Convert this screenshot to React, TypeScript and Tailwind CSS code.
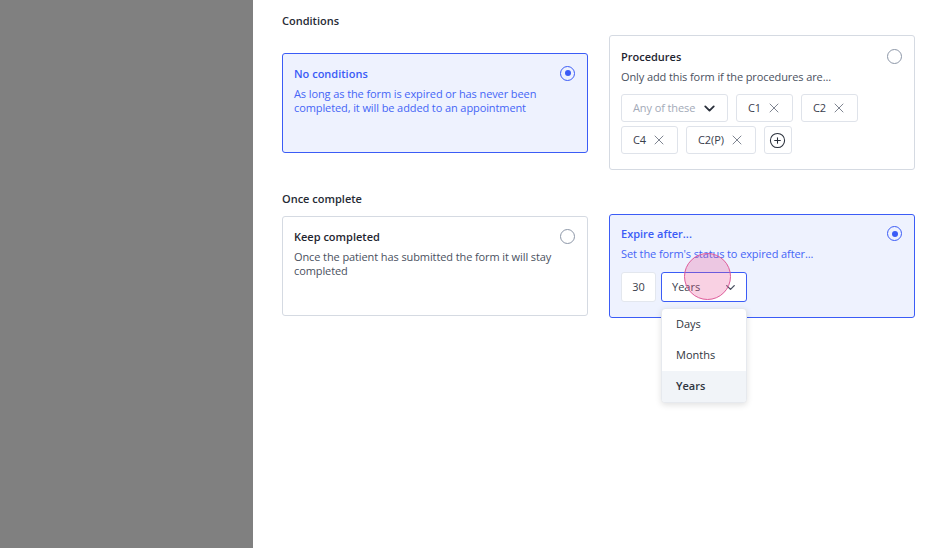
import React from "react";
import { X, ChevronDown, CirclePlus } from "lucide-react";

const font = { fontFamily: '"Open Sans", "Noto Sans", sans-serif' };

function Radio({ on }: { on?: boolean }) {
  return on ? (
    <div className="flex h-[15px] w-[15px] shrink-0 items-center justify-center rounded-full border-[1.5px] border-[#3b5cf6]">
      <div className="h-[6px] w-[6px] rounded-full bg-[#3b5cf6]" />
    </div>
  ) : (
    <div className="h-[15px] w-[15px] shrink-0 rounded-full border border-[#8d97a8]" />
  );
}

function Tag({ label }: { label: string }) {
  return (
    <div className="flex h-[28px] items-center gap-[5px] rounded-[3px] border border-[#dfe3ea] bg-white pl-[11px] pr-[10px] text-[11px] tracking-[-0.1px] text-[#3a404c]">
      <span>{label}</span>
      <X size={16} strokeWidth={1.3} className="text-[#6b7280]" />
    </div>
  );
}

function Card({
  selected,
  title,
  desc,
  children,
  className = "",
}: {
  selected?: boolean;
  title: string;
  desc: string;
  children?: React.ReactNode;
  className?: string;
}) {
  return (
    <div
      className={`rounded-[3px] border px-[11px] ${
        selected ? "border-[#3b5cf6] bg-[#eef2fe]" : "border-[#d5dae2] bg-white"
      } ${className}`}
    >
      <div className="flex items-start justify-between">
        <div
          className={`text-[11px] font-semibold leading-[16px] ${
            selected ? "text-[#3b5cf6]" : "text-[#1f2530]"
          }`}
        >
          {title}
        </div>
        <div className="mr-[1px]">
          <Radio on={selected} />
        </div>
      </div>
      <div
        className={`mt-[5px] pr-[6px] text-[11px] leading-[14px] tracking-[-0.1px] ${
          selected ? "text-[#4565f6]" : "text-[#4a5160]"
        }`}
      >
        {desc}
      </div>
      {children}
    </div>
  );
}

export default function App() {
  return (
    <div className="flex h-[548px] w-[944px] overflow-hidden" style={font}>
      <div className="w-[253px] shrink-0 bg-[#808080]" />
      <div className="relative flex-1 bg-white px-[29px] pt-[13px]">
        <h3 className="text-[11px] font-semibold leading-[16px] text-[#262b35]">Conditions</h3>
        <div className="mt-[6px] grid grid-cols-2 items-center gap-x-[21px]">
          <Card
            selected
            title="No conditions"
            desc="As long as the form is expired or has never been completed, it will be added to an appointment"
            className="h-[100px] pt-[12px]"
          />
          <Card
            title="Procedures"
            desc="Only add this form if the procedures are..."
            className="pb-[15px] pt-[13px]"
          >
            <div className="mt-[10px] flex flex-wrap gap-x-[8px] gap-y-[4px]">
              <div className="flex h-[28px] w-[107px] items-center justify-between rounded-[3px] border border-[#dfe3ea] bg-white pl-[11px] pr-[9px] text-[11px] tracking-[-0.1px] text-[#a3aab8]">
                <span>Any of these</span>
                <ChevronDown size={17} strokeWidth={2.6} className="text-[#2a303b]" />
              </div>
              <Tag label="C1" />
              <Tag label="C2" />
              <Tag label="C4" />
              <Tag label="C2(P)" />
              <div className="flex h-[28px] w-[28px] items-center justify-center rounded-[3px] border border-[#dfe3ea] bg-white">
                <CirclePlus size={17} strokeWidth={1.5} className="text-[#2a303b]" />
              </div>
            </div>
          </Card>
        </div>

        <h3 className="mt-[21px] text-[11px] font-semibold leading-[16px] text-[#262b35]">Once complete</h3>
        <div className="mt-[7px] grid grid-cols-2 items-center gap-x-[21px]">
          <Card
            title="Keep completed"
            desc="Once the patient has submitted the form it will stay completed"
            className="h-[100px] pt-[12px]"
          />
          <Card
            selected
            title="Expire after..."
            desc="Set the form's status to expired after..."
            className="pb-[15px] pt-[11px]"
          >
            <div className="mt-[11px] flex gap-[5px]">
              <div className="flex h-[30px] w-[35px] items-center justify-center rounded-[3px] border border-[#e3e7ee] bg-white text-[11px] text-[#3a404c]">
                30
              </div>
              <div className="relative">
                <div className="flex h-[30px] w-[86px] items-center justify-between rounded-[3px] border border-[#3b5cf6] bg-white pl-[10px] pr-[8px] text-[11px] text-[#3a404c]">
                  <span>Years</span>
                  <ChevronDown size={15} strokeWidth={2.2} className="text-[#4a5160]" />
                </div>
                <div className="absolute left-0 top-[36px] z-10 w-[86px] overflow-hidden rounded-[4px] border border-[#e6e9ee] bg-white shadow-[0_2px_6px_rgba(0,0,0,0.12)]">
                  <div className="flex h-[31px] items-center px-[14px] text-[11px] text-[#2f3540]">Days</div>
                  <div className="flex h-[31px] items-center px-[14px] text-[11px] text-[#2f3540]">Months</div>
                  <div className="flex h-[31px] items-center bg-[#f1f4f8] px-[14px] text-[11px] font-semibold text-[#2f3540]">
                    Years
                  </div>
                </div>
                <div className="pointer-events-none absolute left-[23px] top-[-19px] z-20 h-[47px] w-[47px] rounded-full border border-[#de5c9a] bg-[rgba(232,90,155,0.28)]" />
              </div>
            </div>
          </Card>
        </div>
      </div>
    </div>
  );
}
